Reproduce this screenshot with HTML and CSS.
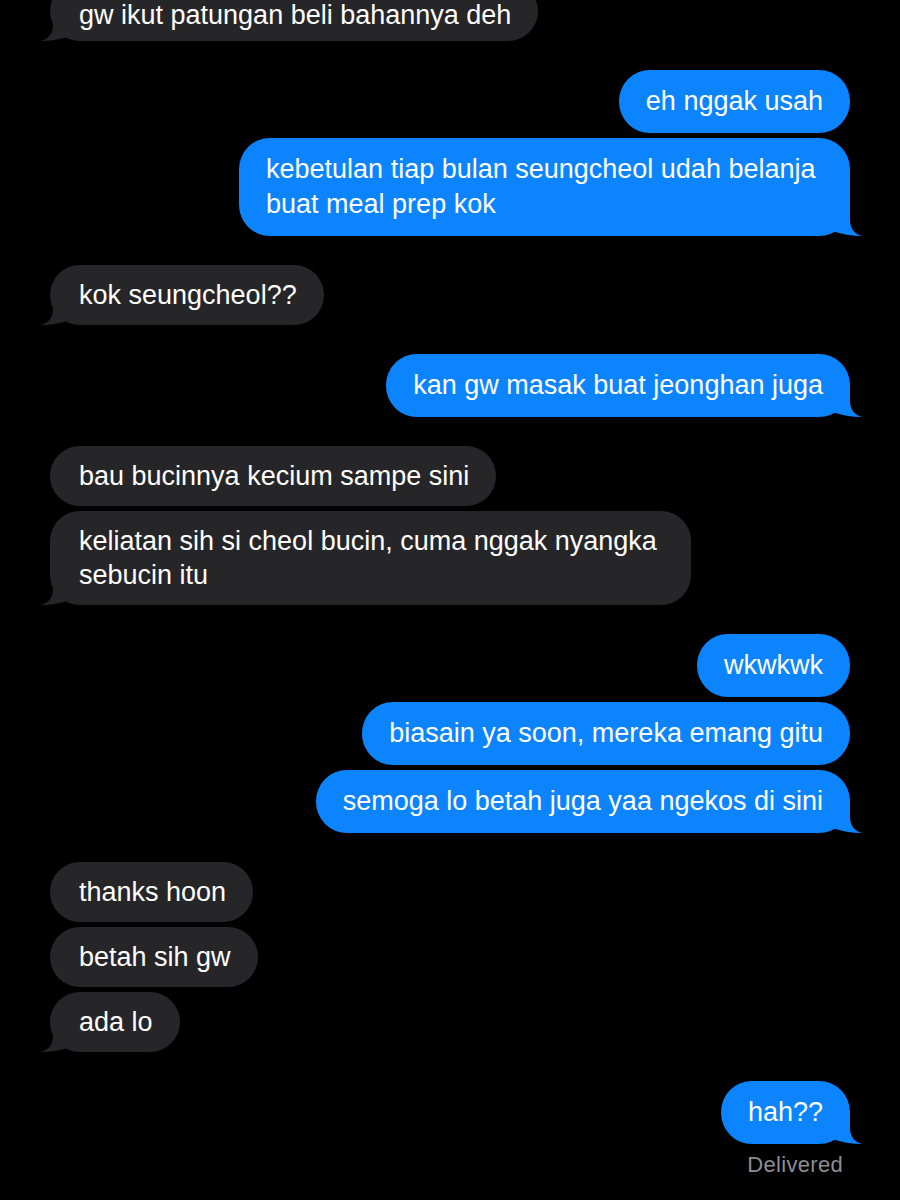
FILE: index.html
```html
<!DOCTYPE html>
<html lang="id">
<head>
<meta charset="utf-8">
<title>Messages</title>
<link rel="stylesheet" href="styles.css">
</head>
<body>
<div class="thread">
  <div class="group in first">
    <div class="bubble in">gw ikut patungan beli bahannya deh<svg class="tail" viewBox="-16 -34 28 34"><path d="M0 -34 L0 -16 C0 -7 5 -2 12 0 Q-2 0 -16 -4.5 L-16 -34 Z"/></svg></div>
  </div>
  <div class="group out">
    <div class="bubble out">eh nggak usah</div>
    <div class="bubble out">kebetulan tiap bulan seungcheol udah belanja&nbsp;<br>buat meal prep kok<svg class="tail" viewBox="-16 -34 28 34"><path d="M0 -34 L0 -16 C0 -7 5 -2 12 0 Q-2 0 -16 -4.5 L-16 -34 Z"/></svg></div>
  </div>
  <div class="group in">
    <div class="bubble in">kok seungcheol??<svg class="tail" viewBox="-16 -34 28 34"><path d="M0 -34 L0 -16 C0 -7 5 -2 12 0 Q-2 0 -16 -4.5 L-16 -34 Z"/></svg></div>
  </div>
  <div class="group out">
    <div class="bubble out">kan gw masak buat jeonghan juga<svg class="tail" viewBox="-16 -34 28 34"><path d="M0 -34 L0 -16 C0 -7 5 -2 12 0 Q-2 0 -16 -4.5 L-16 -34 Z"/></svg></div>
  </div>
  <div class="group in">
    <div class="bubble in">bau bucinnya kecium sampe sini</div>
    <div class="bubble in">keliatan sih si cheol bucin, cuma nggak nyangka&nbsp;<br>sebucin itu<svg class="tail" viewBox="-16 -34 28 34"><path d="M0 -34 L0 -16 C0 -7 5 -2 12 0 Q-2 0 -16 -4.5 L-16 -34 Z"/></svg></div>
  </div>
  <div class="group out">
    <div class="bubble out">wkwkwk</div>
    <div class="bubble out">biasain ya soon, mereka emang gitu</div>
    <div class="bubble out">semoga lo betah juga yaa ngekos di sini<svg class="tail" viewBox="-16 -34 28 34"><path d="M0 -34 L0 -16 C0 -7 5 -2 12 0 Q-2 0 -16 -4.5 L-16 -34 Z"/></svg></div>
  </div>
  <div class="group in">
    <div class="bubble in">thanks hoon</div>
    <div class="bubble in">betah sih gw</div>
    <div class="bubble in">ada lo<svg class="tail" viewBox="-16 -34 28 34"><path d="M0 -34 L0 -16 C0 -7 5 -2 12 0 Q-2 0 -16 -4.5 L-16 -34 Z"/></svg></div>
  </div>
  <div class="group out">
    <div class="bubble out">hah??<svg class="tail" viewBox="-16 -34 28 34"><path d="M0 -34 L0 -16 C0 -7 5 -2 12 0 Q-2 0 -16 -4.5 L-16 -34 Z"/></svg></div>
    <div class="status">Delivered</div>
  </div>
</div>
</body>
</html>
```

FILE: styles.css
```css
html, body {
  margin: 0;
  padding: 0;
  background: #000;
}
body {
  width: 900px;
  height: 1200px;
  overflow: hidden;
  font-family: "Liberation Sans", Arial, sans-serif;
  -webkit-font-smoothing: antialiased;
}
.thread {
  display: flex;
  flex-direction: column;
  gap: 29px;
  padding: 0 50px;
}
.group {
  display: flex;
  flex-direction: column;
  gap: 5px;
}
.group.first {
  margin-top: -19px;
}
.group.first .bubble {
  padding-top: 17px;
  padding-bottom: 9px;
}
.group.in {
  align-items: flex-start;
}
.group.out {
  align-items: flex-end;
}
.bubble {
  position: relative;
  font-size: 27px;
  color: #fff;
  padding: 14px 27px;
  line-height: 35px;
  border-radius: 31px;
  max-width: 700px;
}
.bubble.out {
  background: #0b84fe;
}
.bubble.in {
  background: #262629;
  padding: 13px 27px 13px 29px;
  line-height: 34px;
  border-radius: 30px;
}
.tail {
  position: absolute;
  bottom: 0;
  width: 28px;
  height: 34px;
  overflow: visible;
}
.bubble.out .tail {
  right: -12px;
  fill: #0b84fe;
}
.bubble.in .tail {
  left: -9px;
  transform: scaleX(-1);
  fill: #262629;
}
.status {
  margin-top: 3px;
  margin-right: 7px;
  font-size: 22px;
  letter-spacing: 0.3px;
  line-height: 26px;
  color: #8e8e93;
}
```
